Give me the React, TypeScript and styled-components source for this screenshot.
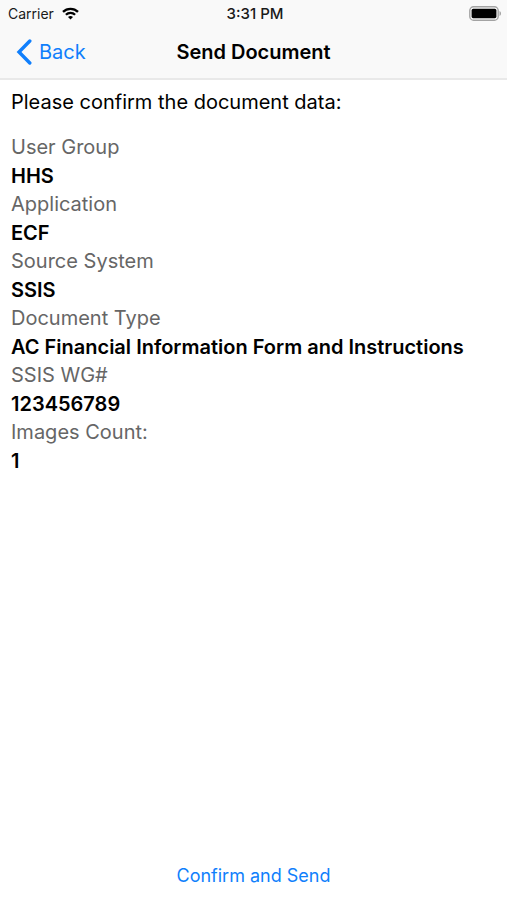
import React from "react";
import styled, { createGlobalStyle } from "styled-components";

const Global = createGlobalStyle`
  * { box-sizing: border-box; }
  body {
    margin: 0;
    background: #fff;
    color: #000;
    font-family: Inter, "Liberation Sans", sans-serif;
  }
`;

const Screen = styled.div`
  display: flex;
  flex-direction: column;
  min-height: 100vh;
`;

const Header = styled.header`
  padding-bottom: 1px;
  background: #f9f9f9;
  border-bottom: 2px solid #e9e9e9;
`;

const Columns = styled.div`
  display: grid;
  grid-template-columns: 1fr auto 1fr;
  align-items: center;
`;

const StatusBar = styled(Columns)`
  height: 27px;
  padding: 0 5px 0 8px;
  font-size: 14px;
  line-height: 20px;
  color: #1a1a1a;
`;

const NavBar = styled(Columns)`
  height: 50px;
  padding: 0 16px;
`;

const Carrier = styled.div`
  display: flex;
  align-items: center;
  gap: 8px;
`;

const Time = styled.time`
  font-size: 15px;
  font-weight: 500;
`;

const Battery = styled.svg`
  justify-self: end;
`;

const TextButton = styled.button`
  display: flex;
  align-items: center;
  gap: 7px;
  padding: 0;
  border: 0;
  background: none;
  color: #107ffc;
  font-family: inherit;
  font-size: ${(p: { $size: number }) => p.$size}px;
  line-height: 28px;
  cursor: pointer;
`;

const Title = styled.h1`
  margin: 0;
  font-size: 20px;
  line-height: 28px;
  font-weight: 600;
`;

const Content = styled.main`
  flex: 1;
  padding: 8px 11px;
`;

const Prompt = styled.p`
  margin: 0 0 17px;
  font-size: 20px;
  line-height: 28px;
`;

const Details = styled.dl`
  margin: 0;
  font-size: 20px;
  line-height: 28px;
`;

const Field = styled.div`
  display: grid;
  gap: 1px;
`;

const Label = styled.dt`
  color: #666;
`;

const Value = styled.dd`
  margin: 0;
  font-weight: 600;
`;

const Footer = styled.footer`
  display: flex;
  justify-content: center;
  padding-bottom: 10px;
`;

const fields = [
  { label: "User Group", value: "HHS" },
  { label: "Application", value: "ECF" },
  { label: "Source System", value: "SSIS" },
  { label: "Document Type", value: "AC Financial Information Form and Instructions" },
  { label: "SSIS WG#", value: "123456789" },
  { label: "Images Count:", value: "1" },
];

export default function App() {
  return (
    <Screen>
      <Global />
      <Header>
        <StatusBar>
          <Carrier>
            <span>Carrier</span>
            <svg width="17" height="13" viewBox="0 0 17 13" fill="none" stroke="#000" strokeWidth="2.3" aria-label="Wi-Fi">
              <path d="M1 4.900a10.600 10.600 0 0 1 15 0" />
              <path d="M3.900 7.800a6.500 6.500 0 0 1 9.200 0" />
              <path d="M8.500 12.600 6 10.100a3.600 3.600 0 0 1 5 0z" fill="#000" stroke="none" />
            </svg>
          </Carrier>
          <Time>3:31 PM</Time>
          <Battery width="33" height="15" viewBox="0 0 33 15" aria-label="Battery full">
            <rect x="0.8" y="0.8" width="28.4" height="13.4" rx="3.800" fill="none" stroke="#a3a3a3" strokeWidth="1.400" />
            <rect x="2.600" y="2.800" width="24.800" height="9.400" rx="1.600" fill="#000" />
            <path d="M30.500 5c2 .8 2 4.200 0 5z" fill="#a3a3a3" />
          </Battery>
        </StatusBar>
        <NavBar>
          <TextButton type="button" $size={20}>
            <svg width="16" height="26" viewBox="0 0 16 26" fill="none" stroke="currentColor" strokeWidth="3.400" strokeLinecap="round" aria-hidden="true">
              <path d="M13.800 2 3 13l10.800 11" />
            </svg>
            Back
          </TextButton>
          <Title>Send Document</Title>
        </NavBar>
      </Header>
      <Content>
        <Prompt>Please confirm the document data:</Prompt>
        <Details>
          {fields.map((f) => (
            <Field key={f.label}>
              <Label>{f.label}</Label>
              <Value>{f.value}</Value>
            </Field>
          ))}
        </Details>
      </Content>
      <Footer>
        <TextButton type="button" $size={18}>Confirm and Send</TextButton>
      </Footer>
    </Screen>
  );
}
